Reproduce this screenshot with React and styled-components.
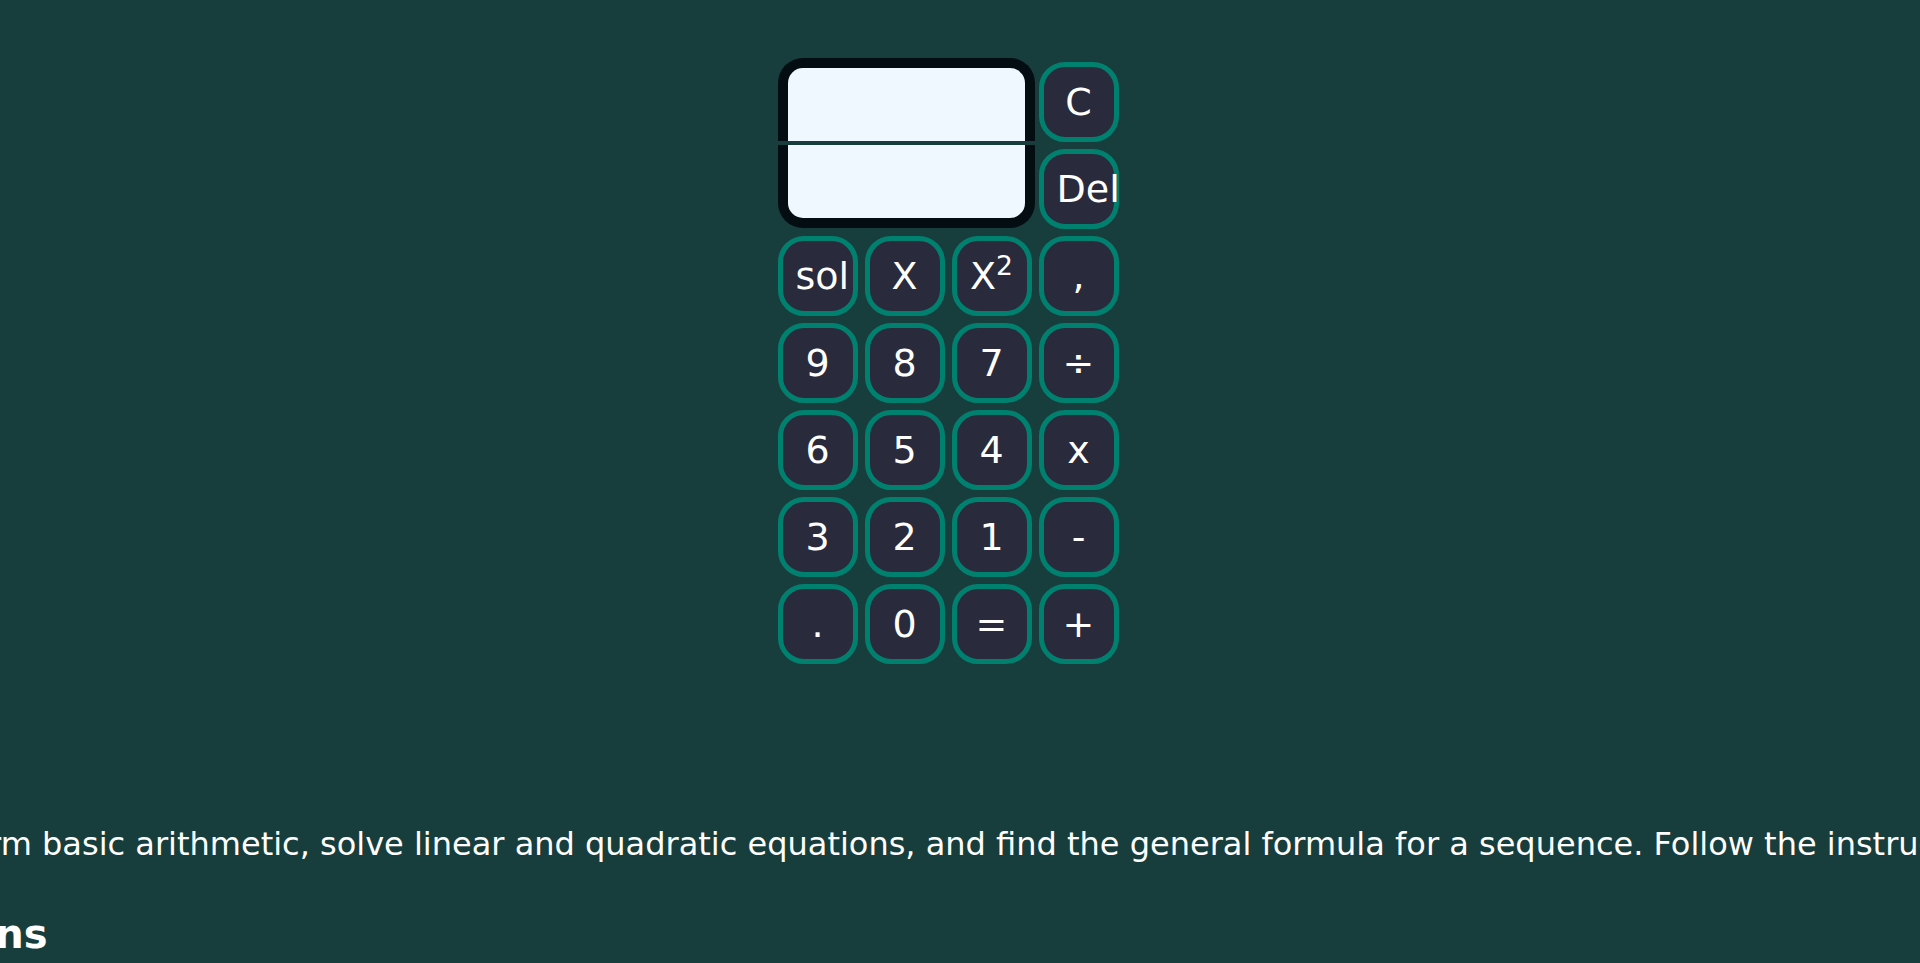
import styled, { createGlobalStyle } from 'styled-components';

const GlobalStyle = createGlobalStyle`
  html, body {
    margin: 0;
    background: #183d3d;
  }

  body {
    overflow-x: hidden;
    color: #ffffff;
    font-family: "DejaVu Sans", "Liberation Sans", sans-serif;
  }
`;

// right padding keeps the same centre line as a page with a scrollbar gutter
const Page = styled.main`
  display: flex;
  flex-direction: column;
  align-items: center;
  padding: 58px 17px 140px 0;
`;

const Keypad = styled.div`
  display: grid;
  grid-template-columns: repeat(4, 87px);
  grid-auto-rows: 87px;
`;

const Screen = styled.div`
  grid-column: 1 / span 3;
  grid-row: 1 / span 2;
  width: 257px;
  height: 170px;
  display: flex;
  flex-direction: column;
  gap: 4px;
`;

const ScreenField = styled.input`
  flex: 1;
  min-height: 0;
  width: 100%;
  box-sizing: border-box;
  margin: 0;
  padding: 0 14px;
  border: 10px solid #040d12;
  border-top-width: ${(p) => (p.$half === 'bottom' ? 0 : '10px')};
  border-bottom-width: ${(p) => (p.$half === 'top' ? 0 : '10px')};
  border-radius: ${(p) => (p.$half === 'top' ? '25px 25px 0 0' : '0 0 25px 25px')};
  background: #f0f8ff;
  color: #040d12;
  font-family: inherit;
  font-size: 28px;
  text-align: right;
  outline: none;
`;

const Key = styled.button`
  align-self: center;
  width: 80px;
  height: 80px;
  box-sizing: border-box;
  padding: 0 13px;
  border: 5px solid #008170;
  border-radius: 26px;
  background: #292a3c;
  color: #ffffff;
  font-family: "DejaVu Sans", "Liberation Sans", sans-serif;
  font-size: 38px;
  white-space: nowrap;
  cursor: pointer;

  sup {
    font-size: 0.7em;
    line-height: 0;
  }
`;

const Info = styled.section`
  margin-top: 153px;
  display: flex;
  flex-direction: column;
  align-items: flex-start;
`;

const Lead = styled.p`
  margin: 0;
  font-size: 32px;
  line-height: 1.5;
  white-space: nowrap;
`;

const Heading = styled.h2`
  margin: 42px 0 0;
  font-size: 40px;
  line-height: 1.2;
  font-weight: 700;
`;

const Steps = styled.ol`
  margin: 24px 0 0;
  padding-left: 40px;
  font-size: 28px;
  line-height: 1.6;
`;

const keys = [
  { id: 'C', label: 'C' },
  { id: 'Del', label: 'Del' },
  { id: 'sol', label: 'sol' },
  { id: 'X', label: 'X' },
  { id: 'X2', label: <>X<sup>2</sup></> },
  { id: 'comma', label: ',' },
  { id: '9', label: '9' },
  { id: '8', label: '8' },
  { id: '7', label: '7' },
  { id: 'div', label: '÷' },
  { id: '6', label: '6' },
  { id: '5', label: '5' },
  { id: '4', label: '4' },
  { id: 'mul', label: 'x' },
  { id: '3', label: '3' },
  { id: '2', label: '2' },
  { id: '1', label: '1' },
  { id: 'sub', label: '-' },
  { id: 'dot', label: '.' },
  { id: '0', label: '0' },
  { id: 'eq', label: '=' },
  { id: 'add', label: '+' },
];

const steps = [
  'Type a number or an expression with the keypad, then press = to calculate.',
  'For equations, use X as the unknown and X² for the squared term, then press sol.',
  'For sequences, enter the terms separated by commas and press sol.',
  'Press Del to erase the last character, or C to clear the screen.',
];

export default function App() {
  return (
    <>
      <GlobalStyle />
      <Page>
        <Keypad>
          <Screen>
            <ScreenField $half="top" readOnly value="" aria-label="Input" />
            <ScreenField $half="bottom" readOnly value="" aria-label="Result" />
          </Screen>
          {keys.map((key) => (
            <Key key={key.id} type="button">
              {key.label}
            </Key>
          ))}
        </Keypad>

        <Info>
          <Lead>
            We can perform basic arithmetic, solve linear and quadratic equations, and find the
            general formula for a sequence. Follow the instructions below.
          </Lead>
          <Heading>Instructions</Heading>
          <Steps>
            {steps.map((step) => (
              <li key={step}>{step}</li>
            ))}
          </Steps>
        </Info>
      </Page>
    </>
  );
}
